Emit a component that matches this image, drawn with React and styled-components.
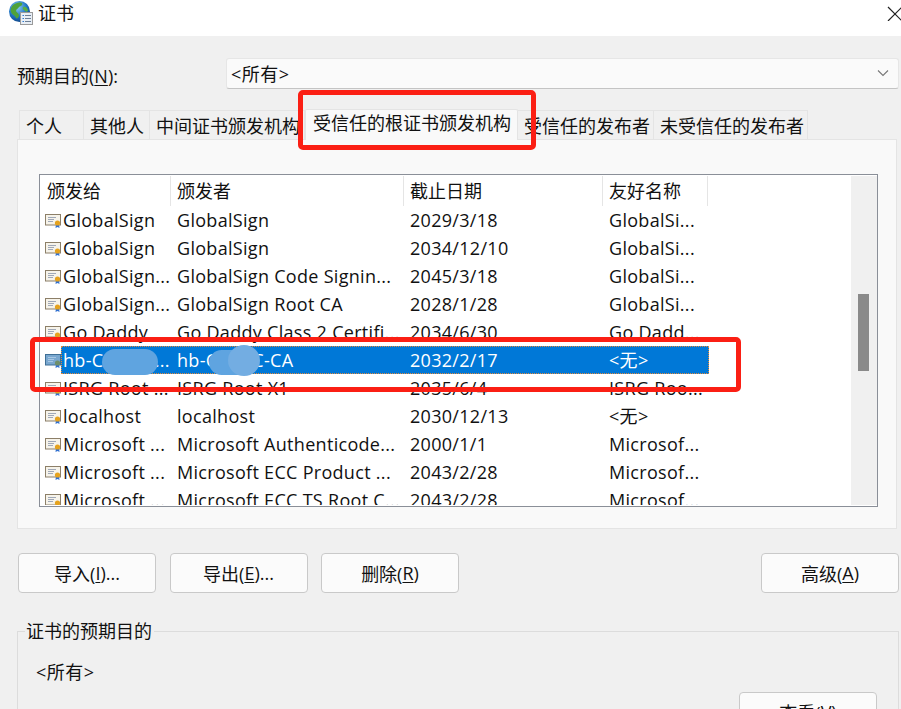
import React from 'react';
import styled, { createGlobalStyle } from 'styled-components';

const GlobalStyle = createGlobalStyle`
  html, body { margin: 0; padding: 0; background: #f0f0f0; }
  body { font-family: "Open Sans", "Noto Sans CJK SC", sans-serif; font-size: 18px; color: #111; }
`;

const rows = [
  ['GlobalSign', 'GlobalSign', '2029/3/18', 'GlobalSi...'],
  ['GlobalSign', 'GlobalSign', '2034/12/10', 'GlobalSi...'],
  ['GlobalSign...', 'GlobalSign Code Signin...', '2045/3/18', 'GlobalSi...'],
  ['GlobalSign...', 'GlobalSign Root CA', '2028/1/28', 'GlobalSi...'],
  ['Go Daddy', 'Go Daddy Class 2 Certifi...', '2034/6/30', 'Go Dadd...'],
  ['hb-CCCCCl...', 'hb-CCCCC-CA', '2032/2/17', '<无>', true],
  ['ISRG Root ...', 'ISRG Root X1', '2035/6/4', 'ISRG Roo...'],
  ['localhost', 'localhost', '2030/12/13', '<无>'],
  ['Microsoft ...', 'Microsoft Authenticode...', '2000/1/1', 'Microsof...'],
  ['Microsoft ...', 'Microsoft ECC Product ...', '2043/2/28', 'Microsof...'],
  ['Microsoft ...', 'Microsoft ECC TS Root C...', '2043/2/28', 'Microsof...'],
];

const tabs = [
  ['个人', 65],
  ['其他人', 66],
  ['中间证书颁发机构', 155],
];
const tabsAfter = [
  ['受信任的发布者', 136],
  ['未受信任的发布者', 154],
];

function CertIcon({ selected }) {
  return (
    <svg width="17" height="16" viewBox="0 0 17 16">
      <rect x="0.5" y="1.5" width="15" height="10.5" fill={selected ? '#79a7cf' : '#f6f3ea'} stroke={selected ? '#3f6f96' : '#8c7f68'} />
      <path d="M3 4.5h8M3 6.5h6M3 8.5h5" stroke={selected ? '#a9c8e4' : '#9fa8b8'} />
      <path d="M11 11l-0.5 4 2-1 2 1-0.5-4z" fill="#2f6fd0" />
      <circle cx="12.5" cy="10" r="2.6" fill={selected ? '#6f8f6a' : '#e5a21e'} />
    </svg>
  );
}

function GlobeIcon() {
  return (
    <svg width="26" height="26" viewBox="0 0 26 26">
      <defs>
        <radialGradient id="sea" cx="0.4" cy="0.3" r="0.8">
          <stop offset="0" stopColor="#8fd0f5" />
          <stop offset="0.55" stopColor="#1f74c4" />
          <stop offset="1" stopColor="#0c3a78" />
        </radialGradient>
      </defs>
      <circle cx="11.5" cy="10.5" r="10.5" fill="url(#sea)" />
      <path d="M5 4c3-2 6-3 9-2 1 2-1 3-3 4-1 2-3 2-3 4 1 2 3 2 3 5-1 2-2 3-3 2-1-3-4-3-5-6-1-2 0-5 2-7z" fill="#4fa23a" />
      <path d="M15 6c2-1 4 0 5 3 0 2-2 2-3 1s-3-2-2-4z" fill="#5cae42" />
      <rect x="12.5" y="11.5" width="12" height="12" fill="#e8eef5" stroke="#9a9a9a" />
      <path d="M17 14.5h6M17 17.5h6M17 20.5h6" stroke="#6d7f96" />
      <path d="M14.5 14.5h1.5M14.5 17.5h1.5M14.5 20.5h1.5" stroke="#2d7ad0" />
    </svg>
  );
}

function Underlined({ before, letter, after }) {
  return (
    <>
      {before}<Key>{letter}</Key>{after}
    </>
  );
}

export default function App() {
  return (
    <Page>
      <GlobalStyle />
      <TitleBar>
        <GlobeSlot><GlobeIcon /></GlobeSlot>
        <Title>证书</Title>
        <CloseIcon width="15" height="15" viewBox="0 0 15 15">
          <path d="M1 1l14 14M15 1L1 15" stroke="#222" strokeWidth="1.2" fill="none" />
        </CloseIcon>
      </TitleBar>

      <Body>
        <PurposeRow>
          <PurposeLabel><Underlined before="预期目的(" letter="N" after="):" /></PurposeLabel>
          <Combo>
            <ComboValue>&lt;所有&gt;</ComboValue>
            <svg width="12" height="8" viewBox="0 0 12 8">
              <path d="M1 1.5l5 5 5-5" stroke="#777" strokeWidth="1.1" fill="none" />
            </svg>
          </Combo>
        </PurposeRow>

        <TabStrip>
          {tabs.map(([label, width]) => <Tab key={label} $width={width}>{label}</Tab>)}
          <ActiveTab>受信任的根证书颁发机构</ActiveTab>
          {tabsAfter.map(([label, width]) => <Tab key={label} $width={width}>{label}</Tab>)}
        </TabStrip>

        <TabPanel>
          <CertList>
            <ListColumn>
              <HeaderRow>
                <HeaderCell $width={130}>颁发给</HeaderCell>
                <HeaderCell $width={233}>颁发者</HeaderCell>
                <HeaderCell $width={199}>截止日期</HeaderCell>
                <HeaderCell $width={105}>友好名称</HeaderCell>
              </HeaderRow>
              {rows.map((row, index) => (
                <Row key={index}>
                  <IconSlot><CertIcon selected={row[4]} /></IconSlot>
                  <Cells $selected={row[4]}>
                    <Cell>{row[0]}</Cell>
                    <Cell>{row[1]}</Cell>
                    <Cell>{row[2]}</Cell>
                    <Cell>{row[3]}</Cell>
                  </Cells>
                </Row>
              ))}
            </ListColumn>
            <ScrollTrack><ScrollThumb /></ScrollTrack>
          </CertList>
        </TabPanel>

        <ButtonRow>
          <ButtonGroup>
            <Button><Underlined before="导入(" letter="I" after=")..." /></Button>
            <Button><Underlined before="导出(" letter="E" after=")..." /></Button>
            <Button><Underlined before="删除(" letter="R" after=")" /></Button>
          </ButtonGroup>
          <Button><Underlined before="高级(" letter="A" after=")" /></Button>
        </ButtonRow>

        <PurposeGroup>
          <Legend>证书的预期目的</Legend>
          <PurposeValue>&lt;所有&gt;</PurposeValue>
          <ViewRow>
            <Button><Underlined before="查看(" letter="V" after=")" /></Button>
          </ViewRow>
        </PurposeGroup>
      </Body>

      <RedBox $left={298} $top={90} $width={238} $height={60} />
      <RedBox $left={30} $top={337} $width={711} $height={55} />
      <Smudge $left={102} $top={349} $width={56} $height={26} />
      <Smudge $left={209} $top={350} $width={48} $height={25} />
      <SmudgeSpot $left={228} $top={345} $width={32} $height={31} />
    </Page>
  );
}

const Page = styled.div`
  position: relative;
  width: 901px;
  height: 709px;
  overflow: hidden;
  background: #f0f0f0;
`;

const TitleBar = styled.div`
  height: 36px;
  background: #fff;
  display: flex;
  align-items: flex-start;
`;

const GlobeSlot = styled.div`
  width: 38px;
  padding: 1px 0 0 8px;
  box-sizing: border-box;
`;

const Title = styled.div`
  flex: 1;
  line-height: 27px;
`;

const CloseIcon = styled.svg`
  margin: 6px -1px 0 0;
`;

const Body = styled.div`
  padding: 22px 2px 0 17px;
`;

const PurposeRow = styled.div`
  display: flex;
  align-items: center;
  height: 31px;
`;

const PurposeLabel = styled.div`
  width: 209px;
  padding-top: 2px;
`;

const Key = styled.span`
  text-decoration: underline;
  text-underline-offset: 2px;
  text-decoration-thickness: 1px;
`;

const Combo = styled.div`
  flex: 1;
  height: 31px;
  box-sizing: border-box;
  display: flex;
  align-items: center;
  justify-content: space-between;
  padding: 0 9px 2px 4px;
  background: #fafafa;
  border: 1px solid #e6e6e6;
  border-bottom-color: #c4c4c4;
  border-radius: 3px;
`;

const ComboValue = styled.span`
  letter-spacing: 0.5px;
`;

const TabStrip = styled.div`
  display: flex;
  align-items: flex-end;
  height: 50px;
  margin-left: 2px;
`;

const Tab = styled.div`
  width: ${props => props.$width}px;
  height: 29px;
  box-sizing: border-box;
  padding-left: 6px;
  line-height: 30px;
  white-space: nowrap;
  overflow: hidden;
  background: #f0f0f0;
  border: 1px solid #e4e4e4;
  border-bottom: 0;
  border-left-width: 0;
  &:first-child { border-left-width: 1px; }
`;

const ActiveTab = styled.div`
  width: 213px;
  height: 31px;
  box-sizing: border-box;
  padding-left: 7px;
  line-height: 27px;
  white-space: nowrap;
  background: #f9f9f9;
  border: 1px solid #e4e4e4;
  border-bottom: 0;
  border-radius: 2px 2px 0 0;
  margin-bottom: -1px;
  position: relative;
`;

const TabPanel = styled.div`
  width: 880px;
  height: 390px;
  box-sizing: border-box;
  padding: 34px 18px 21px 21px;
  background: #f9f9f9;
  border: 1px solid #e4e4e4;
`;

const CertList = styled.div`
  height: 333px;
  box-sizing: border-box;
  display: flex;
  padding: 1px 0 1px 1px;
  background: #fff;
  border: 1px solid #8a8f98;
  overflow: hidden;
`;

const ListColumn = styled.div`
  flex: 1;
  min-width: 0;
  overflow: hidden;
`;

const HeaderRow = styled.div`
  display: flex;
  height: 30px;
  margin-bottom: 1px;
`;

const HeaderCell = styled.div`
  width: ${props => props.$width}px;
  box-sizing: border-box;
  padding-left: 6px;
  line-height: 30px;
  border-right: 1px solid #e5e5e5;
`;

const Row = styled.div`
  display: flex;
  height: 28px;
  line-height: 27px;
`;

const IconSlot = styled.div`
  width: 20px;
  flex: none;
  box-sizing: border-box;
  padding: 6px 0 0 4px;
  line-height: 0;
`;

const Cells = styled.div`
  display: grid;
  grid-template-columns: 110px 233px 199px 105px;
  width: 648px;
  box-sizing: border-box;
  height: 28px;
  margin-top: ${props => props.$selected ? '-1px' : '0'};
  padding-top: ${props => props.$selected ? '1px' : '0'};
  color: ${props => props.$selected ? '#fff' : '#111'};
  background: ${props => props.$selected ? '#0078d7' : 'transparent'};
  outline: ${props => props.$selected ? '1px dotted #e08a3c' : 'none'};
  outline-offset: -1px;
`;

const Cell = styled.div`
  padding-left: 6px;
  white-space: nowrap;
  overflow: hidden;
  letter-spacing: 0.3px;
  &:first-child { padding-left: 2px; }
`;

const ScrollTrack = styled.div`
  width: 26px;
  flex: none;
  background: #f0f0f0;
  padding: 118px 0 0 7px;
  box-sizing: border-box;
`;

const ScrollThumb = styled.div`
  width: 11px;
  height: 77px;
  background: #8a8a8a;
`;

const ButtonRow = styled.div`
  display: flex;
  justify-content: space-between;
  margin: 24px 0 0 1px;
`;

const ButtonGroup = styled.div`
  display: flex;
  gap: 13.5px;
`;

const Button = styled.div`
  width: 138px;
  height: 40px;
  box-sizing: border-box;
  display: flex;
  align-items: center;
  justify-content: center;
  background: #fbfbfb;
  border: 1px solid #c9c9c9;
  border-radius: 4px;
`;

const PurposeGroup = styled.div`
  position: relative;
  height: 120px;
  margin-top: 38px;
  padding: 27px 0 0 18px;
  border-top: 1px solid #dcdcdc;
  border-left: 1px solid #dcdcdc;
  border-right: 1px solid #dcdcdc;
`;

const Legend = styled.div`
  position: absolute;
  top: -13px;
  left: 7px;
  padding: 0 2px 0 1px;
  line-height: 24px;
  background: #f0f0f0;
`;

const PurposeValue = styled.div`
  line-height: 26px;
  letter-spacing: 0.5px;
`;

const ViewRow = styled.div`
  display: flex;
  justify-content: flex-end;
  margin: 7px 21px 0 0;
`;

const RedBox = styled.div`
  position: absolute;
  left: ${props => props.$left}px;
  top: ${props => props.$top}px;
  width: ${props => props.$width}px;
  height: ${props => props.$height}px;
  box-sizing: border-box;
  border: 5px solid #fb1f14;
  border-radius: 5px;
`;

const Smudge = styled.div`
  position: absolute;
  left: ${props => props.$left}px;
  top: ${props => props.$top}px;
  width: ${props => props.$width}px;
  height: ${props => props.$height}px;
  border-radius: 13px;
  background: #5fa4e0;
`;

const SmudgeSpot = styled(Smudge)`
  border-radius: 50%;
  background: #73ade2;
`;
